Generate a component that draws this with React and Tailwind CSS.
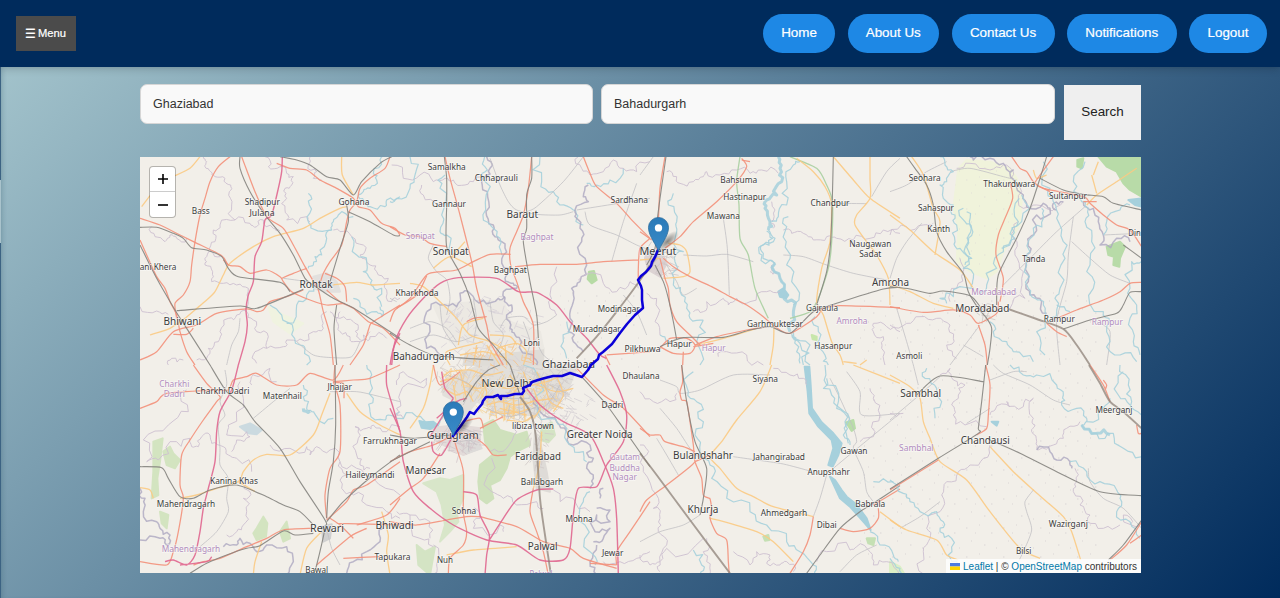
const LAND = '#f2efe9';

// Line styles of the base map: [colour, width, opacity, shape]
const STYLE = {
  r: ['#f3907a', 1.25, 0.9, 'smooth'],
  m: ['#e0668f', 1.4, 0.9, 'smooth'],
  y: ['#fbca83', 1.3, 0.9, 'smooth'],
  k: ['#85847f', 1.1, 0.9, 'smooth'],
  d: ['#8e8178', 1.9, 0.75, 'smooth'],
  g: ['#c0bec2', 0.9, 0.85, 'smooth'],
  p: ['#cdbfd0', 1, 0.9, 'rough'],
  b: ['#aca7c0', 1.5, 0.8, 'rough'],
  w: ['#a6d0dc', 1.2, 0.9, 'rough'],
  W: ['#a6d0dc', 3, 0.85, 'rough'],
  n: ['#a9cfa0', 1.3, 0.9, 'smooth'],
};

const noise = (n) => {
  const s = Math.sin(n * 12.9898) * 43758.5453;
  return s - Math.floor(s) - 0.5;
};

const parse = (d, seam) =>
  d
    .replace(/Z/g, '')
    .split('M')
    .filter(Boolean)
    .map((part) =>
      part.split('L').map((pair) => {
        const [x, y] = pair.trim().split(' ').map(Number);
        return [x, seam && y === 5 ? 0 : y];
      }),
    );

// Splits every segment and pushes its middle sideways, for rivers and borders.
function roughen(points, amount) {
  let out = points;
  for (let pass = 0; pass < 2; pass += 1) {
    const next = [out[0]];
    for (let i = 1; i < out.length; i += 1) {
      const [ax, ay] = out[i - 1];
      const [bx, by] = out[i];
      const shift = noise(ax + by * 1.7 + pass) * amount;
      next.push([(ax + bx) / 2 - (by - ay) * shift, (ay + by) / 2 + (bx - ax) * shift], [bx, by]);
    }
    out = next;
  }
  return 'M' + out.map(([x, y]) => `${x.toFixed(1)} ${y.toFixed(1)}`).join('L');
}

// Catmull-Rom curve through the points, for roads and railways.
function smooth(points) {
  let d = `M${points[0][0]} ${points[0][1]}`;
  for (let i = 0; i < points.length - 1; i += 1) {
    const p0 = points[i - 1] || points[i];
    const p1 = points[i];
    const p2 = points[i + 1];
    const p3 = points[i + 2] || p2;
    const c = (a, b, s) => (a + (b * s) / 8).toFixed(1);
    d += `C${c(p1[0], p2[0] - p0[0], 1)} ${c(p1[1], p2[1] - p0[1], 1)} ${c(p2[0], p3[0] - p1[0], -1)} ${c(p2[1], p3[1] - p1[1], -1)} ${p2[0]} ${p2[1]}`;
  }
  return d;
}

const shape = (d, kind, seam) =>
  parse(d, seam)
    .map((points) => (kind === 'rough' ? roughen(points, 0.75) : smooth(points)))
    .join('');

// Each tile draws its features in a 780 x 630 space, a third of a pixel per unit.
const TILES = [
  {
    x: 140, y: 155,
    areas: [['#f0f3e0', 'M385 455L430 480L490 505L450 535L400 500Z'], ['#e2e0de', 'M520 365L560 355L590 380L600 410L560 410L520 400Z']],
    lines: [
      ['p', 'M190 5L200 20L195 35L212 50L225 65L255 70L272 90L268 110L275 150L285 195L330 205L350 215L370 195L400 220L420 228'],
      ['p', 'M285 195L240 210L220 225L225 260L215 290L240 305'],
      ['p', 'M215 290L195 310L195 330L218 350L215 380L250 385L290 390L325 400L325 440L320 470L290 480L265 490L240 530L235 560L205 580L200 610L170 615'],
      ['p', 'M375 5L385 35L420 35L440 55L460 65L455 90L435 100L440 130L435 165L440 195L500 185L510 200'],
      ['p', 'M580 225L600 230L635 245L670 270L660 300L690 330L710 350L745 370L740 405L755 440L780 430'],
      ['p', 'M0 455L50 468L85 478'], ['p', 'M35 215L45 245L75 260L90 240L110 250L140 250'],
      ['p', 'M320 470L340 495L350 530L385 545L380 580L345 590L350 625'],
      ['p', 'M380 580L430 575L440 555L480 552L520 530L550 520L545 490L560 470'],
      ['g', 'M300 490L295 530L275 570L260 630'], ['p', 'M85 630L95 610L130 615'],
      ['p', 'M510 5L505 30L530 50L520 70L545 75'], ['p', 'M600 470L590 500L600 530L630 545L640 560L670 540L690 530'],
      ['p', 'M570 470L600 490L640 500L655 515L650 545L670 555L690 545L740 550'],
      ['w', 'M745 5L720 15L700 55L710 75L690 100L670 110L655 125'],
      ['w', 'M655 125L680 140L690 155L735 155L740 135L780 125'],
      ['w', 'M505 115L508 150L505 200L520 222L575 225L580 200L595 180L640 185'],
      ['w', 'M575 225L560 250L545 300L525 305L520 330L505 340'],
      ['w', 'M635 245L650 300L680 320L670 350L690 370L700 395L725 400L725 455'],
      ['w', 'M640 430L660 455L710 470L725 485L720 455'],
      ['w', 'M390 450L425 480L460 525L480 570L495 580L500 630'], ['w', 'M530 385L500 420L470 450L440 505'],
      ['g', 'M470 560L520 600L580 608L635 605L660 560'],
      ['y', 'M5 155L30 122'], ['y', 'M105 62L150 40L180 5'], ['y', 'M605 5L607 60L640 120'],
      ['y', 'M135 490L200 435L225 410L250 360L270 325L340 275L400 245L490 220L540 190L600 160L620 155'],
      ['y', 'M580 390L650 382L700 390L780 385'], ['y', 'M30 540L90 520L135 490'],
      ['r', 'M270 5L235 35L210 80L195 130L180 180L165 260L155 330L150 380L130 420L105 445L110 490'],
      ['r', 'M0 190L60 210L120 240L165 262L245 302L265 330L300 335L330 355L380 345L420 365L430 380L455 410L510 435L560 450L615 445'],
      ['r', 'M265 330L250 315M425 370L460 355L500 340'],
      ['r', 'M305 5L320 45L345 110L380 185L430 220L460 270L495 335L515 370L535 405L550 470L570 540L580 630'],
      ['r', 'M410 25L450 40L500 45L540 75L590 100L640 130L655 155L690 165L725 205L765 220L780 240'],
      ['r', 'M750 5L735 40L690 70L660 100L650 140L630 165L620 200L605 270L570 320L550 355L540 385'],
      ['r', 'M0 255L20 300L50 365L75 400L90 440L110 480L120 530L140 590L165 630'],
      ['r', 'M0 615L50 590L100 530L170 510L230 475L320 462L350 470L370 465L390 440L440 425L490 405'],
      ['r', 'M555 355L590 370L615 395L620 440M560 405L600 440L640 460L685 500L730 520L780 570'],
      ['r', 'M780 450L740 475L700 500L690 510L670 570L630 630M100 538L140 538L160 520'],
      ['m', 'M427 5L425 50L415 100L395 180L375 195L365 260L345 305L340 380L325 420L318 465L322 510L315 560L295 630'],
      ['m', 'M780 535L760 580L750 630'],
      ['k', 'M300 5L300 40L330 110L375 180L420 235L460 300L495 370L520 390L580 430L650 465L780 550'],
      ['k', 'M0 217L50 217L100 235L130 250L155 278L200 285L245 305L265 340L295 365L420 382L450 410'],
      ['k', 'M420 5L470 15L510 30L560 65L600 75L640 120L665 80L720 25L755 5'],
      ['k', 'M620 150L625 200L600 280L570 380'], ['g', 'M430 370L500 380L520 390'],
      ['k', 'M625 170L690 200L760 240L780 242'],
      ['k', 'M490 403L350 460L300 453L110 467'],
      ['k', 'M0 270L50 370L105 465L140 520L210 630'], ['k', 'M590 450L582 520L590 630'],
    ],
  },
  {
    x: 390, y: 155,
    areas: [
      ['#dcdbd9', 'M200 500L235 450L270 435L280 470L250 490L215 505Z'],
      ['#dfdcd7', 'M240 540L290 530L380 560L460 580L460 630L220 630Z'],
      ['#ece9e3', 'M130 450L340 435L360 500L450 530L460 580L250 600L180 560Z'],
      ['#b7dba5', 'M597 350L612 348L620 375L605 385L593 372Z'],
    ],
    lines: [
      ['b', 'M290 5L300 40L285 65L292 110L288 170L310 210L315 245L335 260L340 300L355 340L345 370L370 385L380 400L340 410L345 430L365 450L350 480L360 520L375 540L395 560L430 600L440 630'],
      ['w', 'M284 5L292 45L280 75L287 165L305 215L330 250L336 300'],
      ['p', 'M5 30L40 70L90 60L130 80L165 70L190 75L225 90L255 70L280 75'],
      ['p', 'M95 90L100 120L140 150L165 150'], ['g', 'M130 270L115 310L140 350L170 375L180 430L170 480'],
      ['w', 'M60 5L75 60L60 100L20 130L0 140'], ['w', 'M165 60L150 100L155 180L150 230L170 240L165 290'],
      ['w', 'M450 5L455 80L490 110L510 150L550 165L560 190L580 210'],
      ['b', 'M595 90L580 125L595 140L555 165L560 190L570 220L575 260L590 330L570 380L545 400L550 440L540 490L535 530L550 560L580 590'],
      ['w', 'M700 40L660 75L620 90L590 85M530 500L520 560L530 610'],
      ['p', 'M565 5L575 40L600 60L640 50L670 15L700 40L740 50L780 20'],
      ['g', 'M300 10L330 90L355 140L380 165L440 178L510 180L550 170'],
      ['g', 'M580 5L520 80L440 155L410 170M560 165L780 130M740 85L700 200L665 320M585 170L600 210L680 240L740 270L780 285'],
      ['p', 'M565 375L640 385L680 410L720 380L745 400M500 335L480 420L480 460L500 480'],
      ['b', 'M110 470L150 450L200 455L210 415L240 415L280 435L325 430L345 425M110 470L120 530L110 580L150 600'],
      ['g', 'M0 430L20 440M60 520L120 500L170 520L200 560M150 450L160 520L200 580M60 560L130 540L200 560L260 540M250 430L260 500L250 560M300 440L310 500L340 540L320 600'],
      ['g', 'M330 520L350 490L400 485L430 510L470 500L500 480M440 560L460 600L500 630M700 420L740 470L770 540M400 500L420 560L410 600'],
      ['y', 'M60 385L100 395L150 440L200 490L240 540L300 560L370 600M180 310L225 260M245 335L180 305L130 340M205 570L220 510L280 490M290 570L330 630M180 630L170 590L280 560M320 580L380 565L410 590L400 630'],
      ['y', 'M210 600L280 590L350 610M260 570L250 630M345 570L350 630M300 540L360 545L380 570'],
      ['r', 'M165 5L180 70L210 180L245 320L260 400L290 510L300 560L340 630'],
      ['r', 'M425 5L415 100L400 180L380 230L360 280L362 330L380 380L400 440L430 510L430 630'],
      ['r', 'M0 215L45 240L90 245L120 265L170 275M0 500L15 465L60 430L110 360L155 350L200 345L250 320L300 298L362 298'],
      ['r', 'M375 335L450 328L560 328L640 320L745 315M110 363L80 420L20 460M230 500L250 490L290 485M580 5L600 55L620 95L680 145L730 200L780 250M780 250L750 280L745 340L745 375'],
      ['m', 'M5 630L15 560L50 490L100 430L150 385L205 368L320 370L385 410L440 412L500 450L540 500L590 550L630 600L650 610'],
      ['r', 'M650 600L780 590'],
      ['r', 'M645 600L660 630'],
      ['k', 'M163 5L170 70L170 150L170 275L210 355L240 430L265 520L310 570L360 630'],
      ['k', 'M0 535L60 570L130 600L230 610L310 615'],
      ['k', 'M425 5L425 70L410 120L410 220L400 260L420 380L440 480L445 550'],
      ['d', 'M780 330L740 390L680 470L620 545L560 610'],
    ],
  },
  {
    x: 640, y: 155,
    areas: [
      ['#dcd3d3', 'M20 290L55 290L80 325L60 365L25 345L15 310Z'],
      ['#a6d0dc', 'M415 410L430 400L445 420L438 430L420 425Z'], ['#c7e6ab', 'M515 540L530 545L530 555L518 553Z'],
    ],
    lines: [
      ['p', 'M80 50L110 65L120 85L160 80L190 65L200 50L240 60L290 45L330 55L365 45L415 55'],
      ['p', 'M20 415L50 430L45 500L60 540M160 470L190 470L200 440L250 430L265 450L290 430L330 440L380 410L420 410'],
      ['p', 'M430 225L455 235L490 235L520 255L560 245L590 250L640 255L690 250L730 225L780 235'],
      ['p', 'M235 605L260 590L320 600L370 630M780 530L740 515L700 505L700 530L730 545L725 580L735 630'],
      ['p', 'M395 140L405 165L390 200L400 220M395 330L410 355L390 350'],
      ['g', 'M0 60L40 5M15 290L35 260M130 300L200 303L260 298L340 320M250 190L262 280L268 420M590 145L680 146M780 10L740 50L695 125'],
      ['g', 'M430 300L490 305L560 330L640 355L740 375M80 330L110 380L130 420L170 400'],
      ['w', 'M100 115L85 150L110 200L110 230L130 290L105 320L100 390L125 420L140 460L150 490L190 495M190 495L170 560L180 630M60 540L80 560'],
      ['W', 'M415 5L420 40L425 80L410 120L380 135L375 160L390 200L385 225'],
      ['w', 'M385 225L405 250L370 270L370 295L405 325'],
      ['w', 'M380 228L398 250L364 272L366 300L405 325L420 370L425 410'],
      ['W', 'M405 325L420 370L425 410L455 435L460 480L450 530'],
      ['w', 'M480 20L460 30L440 80L440 150L415 185L395 200M445 185L435 230L445 290L440 330L455 380L460 450'],
      ['w', 'M455 535L480 565L490 630M460 530L510 570L510 630M455 540L470 590L480 625M525 485L535 530L525 565L555 600L565 630'],
      ['n', 'M300 5L290 80L297 150L300 250L325 300L345 400L385 490'],
      ['n', 'M450 5L530 40L560 90L577 140L575 260L565 340L535 430L510 470L450 490'],
      ['y', 'M470 10L520 50L555 95L574 145L570 260L545 340L530 440L550 480L575 560L600 600L610 630'],
      ['y', 'M580 5L640 75L690 130L780 190M690 5L690 70L690 130L650 180L645 210L680 260L710 300L745 370L750 450'],
      ['y', 'M85 265L120 270L140 290L150 350L130 365L70 370M0 315L60 310M402 510L400 570L390 630M170 570L250 550L350 520M610 620L650 625M660 630L680 615'],
      ['r', 'M75 5L60 100L55 200L50 290M305 10L320 35L290 80L230 140L160 200L120 245L75 280'],
      ['r', 'M305 15L330 20M0 230L35 255M70 310L100 335L150 365L215 395L270 425L320 450L370 485L405 515L450 535L530 485L545 460'],
      ['r', 'M60 310L75 370L85 400L90 450L110 500L150 540L180 570M60 575L100 595L150 595L165 570L140 550L90 550L60 580M165 570L230 545L320 525L380 515M160 575L220 565M130 590L128 630'],
      ['r', 'M545 460L600 452L780 458'],
      ['k', 'M78 5L70 60L60 130L50 210L45 280L20 330'], ['k', 'M45 330L70 380L85 430L100 500L110 555M580 5L577 130L572 260L560 350L530 450M60 575L130 548L250 547L330 525L390 515L450 535L520 470L590 445L730 402L780 397'],
      ['d', 'M55 290L30 340L0 370'],
    ],
  },
  {
    x: 890, y: 155,
    areas: [
      ['#f0f3db', 'M205 40L230 15L300 20L360 40L380 70L395 140L390 210L340 290L320 350L290 370L240 350L200 320L205 220L190 160Z'],
      ['#b8dba8', 'M625 5L755 5L755 125L720 105L700 85L680 50L650 35Z'], ['#b8dba8', 'M650 275L690 260L705 275L690 310L688 335L670 330L672 305L655 300Z'],
      ['#b8dba8', 'M562 15L580 10L575 40L562 35Z'], ['#a6d0dc', 'M715 135L755 130L755 155L735 150Z'],
    ],
    lines: [
      ['p', 'M200 40L240 25L300 45L340 30L370 50L375 80L395 110L400 160L440 150L500 155L520 140'],
      ['b', 'M230 5L250 15L300 10L340 25L370 45L375 85L400 120L410 155L460 145L480 160L440 180L430 240L415 260L410 300L425 310L415 380L420 420L455 440L470 475'],
      ['b', 'M520 140L490 145L500 165M580 140L610 160L625 200L640 240L630 270L680 250L720 260'],
      ['p', 'M0 240L50 215L100 210L130 205M210 310L220 350L200 400L180 440M385 200L370 250L375 300L400 350L405 430L360 460M0 510L50 505L90 485L140 490L180 510L190 550L170 570L200 610'],
      ['g', 'M180 50L240 40L340 65L380 75M0 110L50 90L110 50L170 20M95 205L50 260L20 310L0 370M550 185L535 300L530 380L500 500L510 630M545 260L600 310L660 360L720 385M585 155L500 230L420 310L340 390M750 235L640 240M20 460L50 560L70 630M180 630L240 550L270 510M620 500L660 530L650 630M220 570L280 605'],
      ['w', 'M150 5L165 30L190 50L170 80L150 90L160 130L190 150L195 180L200 210L195 260L210 280L220 340L250 370L245 400L190 425L150 430L170 445'],
      ['w', 'M220 160L225 200L245 220L235 260L245 310L225 330M395 120L395 200L375 250L340 290L320 340L290 390L270 420'],
      ['w', 'M230 170L240 210L232 250L240 300M388 130L385 200L365 245L335 280'],
      ['w', 'M460 20L480 100L490 140L500 190L520 260L525 310L510 400L495 430L480 490M455 160L460 190L430 220L420 290L410 330L415 400L435 430L460 450L465 490L440 530L465 600'],
      ['w', 'M585 20L550 80L570 130L595 160L585 200L605 260L600 330L610 400L640 470L660 500L660 560L690 600L740 620M755 320L725 320L720 400L740 450L720 490L730 560L750 600'],
      ['w', 'M300 500L310 530L350 560L370 590L430 620M500 450L540 470M640 240L650 200L690 165L720 150'],
      ['y', 'M0 180L60 225L130 290L210 345L250 400M65 5L100 60L130 160L150 200L135 300M590 150L620 120L680 80L740 40M0 390L60 410L130 445L190 460M610 60L625 20M605 60L620 115M430 45L440 70L470 60'],
      ['r', 'M365 5L390 40L410 50L430 80L460 100L580 125L600 145L640 180L680 210L720 225L755 275M490 5L450 60L430 90'],
      ['r', 'M360 80L368 130L345 190L325 240L318 300L340 370L330 440M0 455L100 472L190 465L240 480L265 505L320 475L325 440M265 510L285 570L292 630'],
      ['r', 'M755 382L720 385L690 410L640 435L560 465L500 490M470 505L500 530L530 545M440 90L480 110M580 140L620 140'],
      ['k', 'M50 5L75 40L110 90L130 150L140 230L170 290L220 355L235 410L265 460L290 490L305 520L300 580L292 630M470 5L450 70L420 160L380 250L325 360L320 450'],
      ['k', 'M0 395L60 402L120 415L160 408L240 422L270 455M450 70L520 105L580 118L640 125L670 145L755 165M520 522L600 495L680 475L700 450L720 412L755 410M700 270L755 310'],
      ['d', 'M355 462L440 492L520 522L560 570L600 630'],
    ],
  },
  {
    x: 140, y: 365, seam: true,
    areas: [
      ['#d3e4c0', 'M40 230L68 220L60 290L52 340L55 390L35 400L40 320Z'], ['#d3e4c0', 'M70 260L90 245L100 265L120 285L105 310L80 300Z'],
      ['#d3e4c0', 'M350 490L370 455L382 475L378 515L350 525L340 505Z'], ['#d3e4c0', 'M60 440L85 450L80 490L65 475Z'], ['#d3e4c0', 'M420 500L440 470L450 520L430 530Z'],
      ['#cbdae0', 'M300 185L330 175L365 195L350 208L325 205Z'], ['#d0d0d0', 'M545 485L575 478L570 520L550 530Z'],
    ],
    lines: [
      ['p', 'M140 75L145 140L85 180L10 225L20 290L55 285L90 230L150 220M150 220L155 245L175 245L185 215L210 210L215 235L250 245L265 270L290 280L335 320'],
      ['p', 'M335 60L340 30L390 10L410 50M300 50L310 100L265 180L260 210L320 200L330 215L290 225L275 260M390 240L450 250L500 245L510 270L530 245L570 255L600 290L650 310L700 340L780 390'],
      ['g', 'M255 15L260 60L240 110L255 150L235 180L240 250L240 300L265 340L260 400L265 440L230 500L180 545M450 70L400 110L340 160'],
      ['p', 'M780 185L740 200L700 180L680 190L645 185L655 220L650 270L660 300L690 310M600 290L620 330L605 370L640 390L680 420L740 440L780 460'],
      ['b', 'M0 370L15 400L10 440L50 470L60 490L90 510L80 540L60 520L0 525M250 545L290 540L300 520L330 535L350 560L380 540L440 545L460 590L440 630'],
      ['p', 'M260 510L290 500L310 480L320 440L310 400L330 380L310 350'], ['b', 'M730 490L720 530L680 560L640 590L620 625'],
      ['g', 'M570 80L650 80L700 90L780 110M560 490L575 550L600 600'],
      ['w', 'M490 60L490 95L500 130L515 140L530 155L580 160M680 5L690 40L700 100L690 140L735 165L745 150L780 140'],
      ['W', 'M490 130L510 138'],
      ['y', 'M570 85L545 150L520 210L450 270L380 268L340 285L310 320L295 350L230 370L170 390L120 400M620 85L660 140L720 180L780 210M295 350L345 380M0 368L30 375L40 400M545 500L500 550L480 630M365 530L345 590L340 630M725 440L745 510L740 560L750 630'],
      ['r', 'M160 5L200 55L240 95L230 110L190 165L150 225L125 270L120 360L130 400L115 500L100 560L80 600L0 590'],
      ['r', 'M0 130L50 110L80 85L220 75L265 75L280 45L320 35L350 25L410 60L470 60L510 25L580 45L610 5M580 50L600 120L600 260L570 310L555 390L560 460'],
      ['r', 'M160 600L190 590L240 580L320 545L380 520L430 495L520 490M560 465L620 410L640 375L680 360L780 290M590 475L780 480M680 490L630 515L530 600M570 460L600 480L640 520M585 5L583 50L610 55L612 100'],
      ['r', 'M780 400L740 450L650 480M610 580L720 575M580 50L640 45L690 40L780 5'],
      ['m', 'M295 5L275 75L240 140L230 200L225 290L205 370L190 430L180 500L165 570L140 600L100 585L75 590M740 5L740 60L760 130L780 200M120 600L200 590L215 575'],
      ['k', 'M210 5L260 80L310 120L345 170L420 250L480 350L555 465L555 490L530 600L520 630M0 305L65 308L85 340L120 395L160 400L210 375L290 360L380 395L430 420L480 440L520 480'],
      ['k', 'M150 625L200 595L260 570L320 550L360 542L430 498L465 510L520 505M560 470L610 410L700 330L780 270M585 5L587 180L580 290L565 380L560 460'],
    ],
  },
  {
    x: 390, y: 365, seam: true,
    areas: [
      ['#e2dfda', 'M155 50L260 5L560 5L540 60L500 120L440 150L360 150L260 110L220 160L200 110L160 90Z'],
      ['#e3dbd9', 'M120 190L200 180L270 190L270 250L220 270L140 230Z'],
      ['#cfe1bc', 'M280 180L310 165L330 195L380 210L410 200L420 240L380 260L360 275L350 310L330 345L300 360L310 400L290 415L270 400L265 350L270 300L310 268L285 230Z'],
      ['#d8e6c9', 'M100 355L150 340L180 345L220 330L220 400L200 440L205 470L180 500L150 530L165 480L155 420L140 380Z'], ['#d4e4c4', 'M80 540L105 560L135 545L120 630L85 600Z'],
      ['#d4e4c4', 'M455 185L485 172L495 210L475 232L450 225Z'], ['#dedbd7', 'M435 200L450 230L470 320L480 380L440 370L430 280Z'],
      ['#a6d0dc', 'M88 168L105 172L130 170L142 180L120 192L95 188Z'], ['#dddbd9', 'M205 240L260 220L275 250L230 265Z'],
    ],
    lines: [
      ['p', 'M20 60L40 20L110 40L90 65L30 85L20 130L40 160M300 260L350 250L380 200L385 170M305 280L305 380L340 400L380 420L440 410L460 430M220 430L270 460L250 490L330 480L340 500M130 540L140 600L120 630M20 440L60 450L90 520L130 545'],
      ['b', 'M430 100L460 150L500 170L530 200L550 240L600 240L610 280L590 310L610 340L600 370M620 430L660 435L660 470L620 450L615 500L660 490L640 520L610 530M640 370L630 400'],
      ['p', 'M60 450L120 470L120 520M640 590L690 590L740 580L780 560M490 375L550 400L600 440'], ['b', 'M620 540L600 590L620 630'],
      ['w', 'M400 5L430 100L480 160L530 190L540 240L580 260L590 290M600 380L580 410L585 480L600 560L615 600M20 160L80 155L110 180L150 170L160 150'],
      ['y', 'M150 50L200 40L260 70L300 60L350 70L420 60M155 40L180 20L240 15L290 30L340 20M160 70L200 90L230 80L250 110M290 120L330 110L380 120L430 110M300 140L340 145L390 140L420 130M310 95L320 160M340 95L345 165M370 90L372 160M400 90L405 165M430 70L450 130L430 160M440 60L500 80L550 70M460 40L480 110L520 130M500 35L520 90L490 140M350 165L400 170L430 150M210 20L230 100M190 60L200 120M130 5L120 60L100 130L60 190'],
      ['y', 'M400 20L420 60L470 50L520 30M440 20L460 60M270 30L290 80L280 110M360 30L380 70L350 100M330 130L410 150M420 110L490 100'],
      ['g', 'M170 30L240 60L220 120M290 130L360 155L440 125M320 100L420 100M360 120L350 160M385 100L390 160M460 60L500 110M480 60L540 90M205 200L260 240M220 190L275 210M210 230L265 220M240 200L235 260M430 130L470 120L510 60'],
      ['y', 'M455 200L448 300L430 370'],
      ['r', 'M270 455L380 485L460 530L540 550L580 580L680 610'],
      ['y', 'M170 570L250 555L380 545'],
      ['r', 'M190 215L200 250L220 320L220 440L230 500L220 540L180 580L175 630M0 290L60 260L130 240L190 210M0 420L60 370L100 340L150 265M350 270L310 270L285 240L240 210L190 200'],
      ['r', 'M430 370L420 440L440 500L460 560L475 630M0 470L80 480L170 465L230 455L270 455M560 10L640 90L700 130L780 215M780 410L720 500L680 560L680 600M220 170L270 160L280 190M270 190L340 155M600 595L680 600M210 20L150 60L130 5'],
      ['m', 'M0 130L30 200L40 290L70 380L120 430L190 480L290 525L380 540L450 585L520 585L540 550L550 450L565 370L620 365L650 300L700 230L710 150L690 80L650 5'],
      ['m', 'M410 70L450 120L520 170L600 210L640 290L670 370L680 460L685 630M220 380L260 390L270 450L298 510L290 570L285 630M298 525L340 460L380 405L440 375L490 372M125 230L130 260L155 270L190 210M190 100L165 70L155 20M190 100L120 215M140 160L200 110L230 100'],
      ['d', 'M390 95L420 140L437 210L450 400L465 510L483 630'], ['k', 'M0 290L60 260L120 230M220 110L260 50L295 15L330 5M0 210L70 220L180 210'],
      ['k', 'M360 5L390 90M575 35L650 120L700 190L780 305'],
    ],
  },
  {
    x: 640, y: 365, seam: true,
    areas: [
      ['#a6d0dc', 'M494 5L508 5L512 60L516 130L545 172L580 205L605 235L595 270L578 305L565 300L580 250L575 225L535 185L508 145L503 80Z'],
      ['#a6d0dc', 'M570 335L585 345L605 375L620 395L645 415L665 440L680 460L692 495L670 470L630 425L600 400Z'],
      ['#b9dda8', 'M618 172L640 165L645 190L635 198Z'], ['#c5e0b4', 'M680 520L705 520L700 540L685 535Z'], ['#c5e0b4', 'M370 515L385 510L388 525L375 527Z'],
    ],
    lines: [
      ['p', 'M0 80L40 110L90 110L110 85M0 240L20 270L10 320L50 390L40 430L60 460L55 500L80 540L60 590L80 550L190 520M0 570L30 600L60 590L60 620'],
      ['p', 'M400 10L450 30L490 40L500 60M690 70L700 100L720 150L705 200L660 230M280 560L330 600L350 560L390 570L380 595L420 600L440 590L460 620M530 590L560 560L630 555L650 545L690 560L700 600L740 590L780 630M200 520L190 560L200 590L210 630'],
      ['g', 'M60 45L110 65L120 85L180 75L280 30L390 30M280 275L350 285L430 297L510 318M580 310L640 260L780 145M560 330L540 400L520 455M50 220L80 270L115 330M0 530L60 500L130 480L180 450M600 620L650 570L710 540M570 40L600 100L640 190L650 230L640 250L670 320L680 380L700 410M620 20L660 80L665 150L780 145'],
      ['g', 'M60 130L110 190L150 250L180 280'],
      ['w', 'M160 20L145 80L170 110L175 160L165 210L180 260L210 300L215 340L260 400L330 440L380 480L440 530L480 560L520 600L525 630M555 5L560 60L590 130L615 170L610 210L630 240M700 350L760 350M690 500L720 540L760 570L775 590M160 555L185 600L180 630'],
      ['w', 'M560 40L575 90L600 130L622 175L625 235'],
      ['y', 'M395 5L360 80L290 165L245 230L210 275L240 310L290 370L340 395L400 425L520 455M210 460L270 475L350 500L400 530L460 590M640 5L780 55M720 440L780 485'],
      ['r', 'M125 5L128 50L120 80L125 105L140 110L150 170L160 240L165 290L185 340L190 390L210 400M0 190L30 210L60 210L75 230L130 245L165 260M0 440L20 405L80 360L150 305L165 290M210 400L215 430L210 460L230 505L260 525L265 590L268 630M520 455L510 510L490 560L450 625M600 490L640 500L690 490L715 460L715 430M165 290L210 270'],
      ['k', 'M125 5L140 110L165 230L200 310L190 400L180 450'], ['d', 'M0 265L50 330L150 465L270 625'],
      ['k', 'M500 625L540 570L600 490L660 440L700 415L780 362'], ['r', 'M700 420L780 372'],
    ],
  },
  {
    x: 890, y: 365, seam: true,
    areas: [['#dcefc6', 'M0 590L30 605L45 630L0 630Z'], ['#a6d0dc', 'M305 170L325 170L320 182Z']],
    lines: [
      ['p', 'M150 30L180 10L190 45L225 60L205 90L185 120L190 150L225 180L290 185M300 150L315 135L360 125L350 110L400 125L430 100L430 160L435 180L425 200L440 230L445 255L490 240L520 220L530 190L570 170M0 145L40 145M300 240L280 280L240 300L205 320L170 350L155 390L150 440L110 490L120 520L100 560L105 630'],
      ['g', 'M310 5L340 25L420 60L490 105L540 120M300 45L370 20L410 20M0 165L100 80L150 35M230 175L300 130M70 5L85 60M430 375L405 410L410 440L425 495L400 560L385 590M30 490L90 455L150 410M595 310L600 350L640 400L700 430L755 490'],
      ['b', 'M440 255L480 260L500 285L540 290L545 310'], ['p', 'M555 310L560 350L550 380L570 420L600 450L590 470L640 490L690 480M755 470L700 450L720 480'],
      ['w', 'M360 5L400 30L440 30L500 60L520 90L515 120L560 130L590 160L575 180L620 205L670 205L700 250L755 275M590 170L640 130L660 100M690 5L715 60L725 110L755 150M700 20L685 90L720 120'],
      ['W', 'M575 180L620 205L660 210'],
      ['w', 'M540 290L590 320L630 350L680 375L690 400L680 440L720 470L750 520M110 10L105 40L140 70L155 110L135 160M0 345L40 385L60 410L90 440L140 440L160 470L150 500L185 520L175 570L205 600M0 580L30 610L40 630'],
      ['y', 'M0 30L60 65L90 100L100 170L120 220L150 290L230 345L300 440L390 550L450 580M300 245L370 320L430 375L470 410L520 455L545 500L572 585M0 465L50 495L140 525L170 570L205 585'],
      ['r', 'M287 5L300 60L295 150L290 190L260 210M0 375L145 285M755 470L710 540L660 585M755 510L720 535M600 5L640 60L660 110M640 45L650 60L645 75M740 180L745 205L755 205'],
      ['k', 'M287 5L275 110L265 190L265 205L145 280L0 372M80 90L150 33L280 50M300 225L390 265L500 320L630 380L755 392M755 465L700 540L655 585'],
      ['d', 'M597 5L630 55L660 110L700 140L755 190'],
    ],
  },
];

// Built-up districts filled with short streets: [cx, cy, rx, ry, count, colour]
const STREETS = [
  [520, 392, 50, 26, 170, '#d2cdcb'],
  [515, 395, 44, 24, 110, '#f6d293'],
  [545, 372, 34, 14, 70, '#d2cdcb'],
  [460, 375, 24, 18, 60, '#d6cfcd'],
  [462, 378, 20, 14, 26, '#f8cf90'],
  [490, 330, 50, 36, 90, '#d8d2d8'],
  [500, 352, 34, 14, 34, '#f6c48c'],
  [458, 440, 24, 14, 60, '#d3c6ca'],
  [570, 405, 22, 22, 46, '#d5d0d4'],
  [538, 440, 8, 30, 34, '#d0c9c8'],
  [662, 262, 12, 14, 30, '#cfc6c8'],
  [985, 311, 10, 8, 20, '#cfc8c4'],
];

function streets([cx, cy, rx, ry, count], seed) {
  let d = '';
  for (let i = 0; i < count; i += 1) {
    const n = seed * 211 + i * 3.7;
    const angle = noise(n) * Math.PI * 2;
    const radius = Math.sqrt(noise(n + 0.31) + 0.5);
    const x = cx + Math.cos(angle) * rx * radius;
    const y = cy + Math.sin(angle) * ry * radius;
    const turn = 0.5 + (i % 2) * (Math.PI / 2) + noise(n + 0.77) * 0.9;
    const length = 4 + (noise(n + 1.3) + 0.5) * 7;
    d += `M${x.toFixed(1)} ${y.toFixed(1)}l${(Math.cos(turn) * length).toFixed(1)} ${(Math.sin(turn) * length).toFixed(1)}`;
  }
  return d;
}

// Place names: [centre x, baseline, width, text, kind]; kind s = town, c = city, d = district
const LABELS = [
  [262.3, 205, 35, 'Shadipur', 's'], [262, 215.5, 25, 'Julana', 's'], [200.8, 214, 18, 'Bass', 's'], [354, 205.3, 31, 'Gohana', 's'],
  [158, 270, 36.5, 'ani Khera', 's'], [316, 287.7, 33, 'Rohtak', 'c'], [182.3, 325, 37.5, 'Bhiwani', 'c'],
  [446.7, 170.3, 38, 'Samalkha', 's'], [496.3, 180.5, 43, 'Chhaprauli', 's'], [449, 206.5, 34, 'Gannaur', 's'], [522.3, 217.6, 31.5, 'Baraut', 'c'],
  [420.3, 239, 29, 'Sonipat', 'd'], [537, 240, 33, 'Baghpat', 'd'], [450.7, 255.3, 36, 'Sonipat', 'c'], [510.3, 273, 33, 'Baghpat', 's'],
  [417, 295.7, 43, 'Kharkhoda', 's'], [618.7, 311.6, 42, 'Modinagar', 's'], [596.7, 331.9, 48, 'Muradnagar', 's'], [531.7, 346, 16.5, 'Loni', 's'],
  [423.7, 360, 62, 'Bahadurgarh', 'c'], [568.5, 367.7, 53, 'Ghaziabad', 'c'], [629.3, 202.7, 37.5, 'Sardhana', 's'],
  [738.7, 183.3, 37, 'Bahsuma', 's'], [744.7, 199.7, 43, 'Hastinapur', 's'], [723.3, 218.5, 33, 'Mawana', 's'], [830, 205.6, 39, 'Chandpur', 's'],
  [658, 255, 37, 'Meerut', 'c'], [870.3, 246.8, 42, 'Naugawan', 's'], [870.3, 257.2, 22, 'Sadat', 's'], [890.5, 285.7, 37, 'Amroha', 'c'],
  [822, 310.8, 32, 'Gajraula', 's'], [852, 323.5, 31, 'Amroha', 'd'], [775, 326.6, 56, 'Garhmuktesar', 's'], [642.5, 351.8, 36, 'Pilkhuwa', 's'],
  [679.3, 346.6, 25, 'Hapur', 's'], [713.7, 351.4, 24, 'Hapur', 'd'], [833.3, 349.3, 38, 'Hasanpur', 's'],
  [924.7, 181.3, 32, 'Seohara', 's'], [1009.3, 186.5, 52, 'Thakurdwara', 's'], [936, 211, 36, 'Sahaspur', 's'], [1068, 198.6, 38, 'Sultanpur', 's'],
  [938.7, 232.2, 23, 'Kanth', 's'], [1134.5, 235.9, 12.5, 'Din', 's'], [1033.7, 261.8, 23, 'Tanda', 's'], [993.7, 294.7, 45, 'Moradabad', 'd'],
  [982.3, 311.7, 54, 'Moradabad', 'c'], [1059.3, 322.2, 31, 'Rampur', 's'], [1107.3, 324.7, 31, 'Rampur', 'd'], [909.3, 358.7, 26, 'Asmoli', 's'],
  [174.3, 386.5, 30, 'Charkhi', 'd'], [174.3, 396.5, 21, 'Dadri', 'd'], [222.3, 394.3, 54, 'Charkhi Dadri', 's'], [282.3, 399, 39, 'Matenhail', 's'],
  [339.7, 390, 24.5, 'Jhajjar', 's'], [390, 444, 54, 'Farrukhnagar', 's'], [370, 477.7, 49, 'Haileymandi', 's'], [234, 484.3, 48, 'Kanina Khas', 's'],
  [186, 506.8, 58.5, 'Mahendragarh', 's'], [191, 552.3, 58.5, 'Mahendragarh', 'd'], [327, 531.7, 34, 'Rewari', 'c'], [394.5, 528.7, 38, 'Bhiwadi', 'c'],
  [392.5, 560.3, 36, 'Tapukara', 's'], [316.7, 572.8, 23, 'Bawal', 's'],
  [506.5, 387, 50, 'New Delhi', 'c'], [533, 428.7, 42, 'libiza town', 's'], [599.7, 438, 66, 'Greater Noida', 'c'], [452.7, 439, 52, 'Gurugram', 'c'],
  [425.7, 474, 40.5, 'Manesar', 'c'], [538, 460, 46, 'Faridabad', 'c'], [624.7, 460.3, 30.5, 'Gautam', 'd'], [624.7, 470.6, 30.5, 'Buddha', 'd'],
  [624.7, 480.4, 24.5, 'Nagar', 'd'], [542, 485.3, 42.5, 'Ballabgarh', 's'], [464, 513.7, 24.5, 'Sohna', 's'], [579, 521.5, 27, 'Mohna', 's'],
  [542.7, 550.3, 30, 'Palwal', 'c'], [445, 562.5, 16, 'Nuh', 's'], [612.7, 556.4, 21.5, 'Jewar', 's'], [641, 379.4, 37, 'Dhaulana', 's'], [612.3, 407.7, 21.5, 'Dadri', 's'],
  [541, 577, 23, 'Palwal', 'd'],
  [765.3, 382, 25.5, 'Siyana', 's'], [703, 459, 60, 'Bulandshahr', 'c'], [779, 459.8, 52, 'Jahangirabad', 's'], [854, 453.6, 27, 'Gawan', 's'],
  [828.7, 475.2, 42.5, 'Anupshahr', 's'], [703, 512.7, 31, 'Khurja', 'c'], [784, 516.3, 46.5, 'Ahmedgarh', 's'], [826.7, 527.7, 20, 'Dibai', 's'],
  [870.3, 507.2, 30, 'Babrala', 's'], [920.7, 396.8, 41, 'Sambhal', 'c'], [916.3, 450.8, 34.5, 'Sambhal', 'd'], [1114, 413, 37, 'Meerganj', 's'],
  [985.3, 444.3, 49, 'Chandausi', 'c'], [1068.3, 527, 39, 'Wazirganj', 's'], [1023.7, 554.4, 15.5, 'Bilsi', 's'],
];

const ROUTE =
  'M658 250L655 257L652 262L651 266L646 272L641 276L638 280L641 286L642 290L642 300L643 308L635 315L627 324L620 333L612 344L603 352L599 355L598 359L591 365L588 370L582 377L570 373L562 376L553 376L545 378L538 380L532 382L530 385L523 388L524 391L522 394L515 394L507 396L501 396L501 399L498 395L493 397L486 397L483 401L482 404L477 410L474 414L470 412L467 417L460 427L453 436';

function Label({ item }) {
  const [x, y, width, text, kind] = item;
  return (
    <text
      x={x}
      y={y}
      textAnchor="middle"
      textLength={width}
      lengthAdjust="spacingAndGlyphs"
      fontSize={kind === 'c' ? 10.8 : 8.7}
      fill={kind === 'd' ? '#b18cbd' : '#3c3c3c'}
      stroke="#fff"
      strokeOpacity="0.55"
      strokeWidth="1.3"
      paintOrder="stroke"
    >
      {text}
    </text>
  );
}

function Tile({ tile }) {
  return (
    <g transform={`translate(${tile.x} ${tile.y}) scale(0.33333)`}>
      {tile.lines.map(([kind, d], i) => {
        const [stroke, width, opacity, form] = STYLE[kind];
        return (
          <path
            key={i}
            d={shape(d, form, tile.seam)}
            fill="none"
            stroke={stroke}
            strokeWidth={width * 3}
            strokeOpacity={opacity}
            strokeLinejoin="round"
          />
        );
      })}
    </g>
  );
}

function TileAreas({ tile }) {
  return (
    <g transform={`translate(${tile.x} ${tile.y}) scale(0.33333)`}>
      {tile.areas.map(([fill, d], i) => (
        <path key={i} d={d} fill={fill} stroke={fill} strokeWidth="6" strokeLinejoin="round" />
      ))}
    </g>
  );
}

function Marker({ x, y }) {
  return (
    <g transform={`translate(${x} ${y}) scale(0.835)`}>
      <ellipse cx="11" cy="-12" rx="17" ry="7" transform="rotate(-42 11 -12)" fill="url(#pin-shadow)" />
      <path
        d="M0 0C-2 -7 -12 -18 -12 -28.5A12 12 0 0 1 12 -28.5C12 -18 2 -7 0 0Z"
        fill="url(#pin)"
        stroke="#2e6f9f"
        strokeWidth="1"
      />
      <circle cx="0" cy="-28" r="4.4" fill="#fff" />
    </g>
  );
}

function MapView() {
  return (
    <div className="relative h-[416px] w-[1001px] overflow-hidden bg-[#f2efe9]">
      <svg viewBox="140 157 1001 416" className="block h-[416px] w-[1001px] font-['Noto_Sans',sans-serif]">
        <defs>
          <linearGradient id="pin" x1="0" y1="0" x2="0" y2="1">
            <stop offset="0" stopColor="#2a7ab8" />
            <stop offset="1" stopColor="#3a8bc8" />
          </linearGradient>
          <radialGradient id="pin-shadow">
            <stop offset="0" stopColor="#000" stopOpacity="0.45" />
            <stop offset="1" stopColor="#000" stopOpacity="0" />
          </radialGradient>
          <pattern id="villages" width="37" height="29" patternUnits="userSpaceOnUse">
            <path d="M4 6h1.5M17 3h1M29 11h1.5M9 19h1M22 23h1.5M34 26h1M13 11h1" stroke="#d9d6d6" strokeWidth="1.2" />
          </pattern>
        </defs>
        <rect x="140" y="157" width="1001" height="416" fill={LAND} />
        <rect x="860" y="290" width="240" height="270" fill="url(#villages)" />
        <rect x="560" y="290" width="80" height="80" fill="url(#villages)" />
        {TILES.map((tile, i) => (
          <TileAreas key={i} tile={tile} />
        ))}
        <rect x="955" y="165" width="60" height="105" fill="url(#villages)" opacity="0.6" />
        {STREETS.map((area, i) => (
          <path key={i} d={streets(area, i + 1)} fill="none" stroke={area[5]} strokeWidth="0.8" />
        ))}
        {TILES.map((tile, i) => (
          <Tile key={i} tile={tile} />
        ))}
        {LABELS.map((item, i) => (
          <Label key={i} item={item} />
        ))}
        <path d={ROUTE} fill="none" stroke="#0b00d8" strokeWidth="2.5" strokeLinejoin="round" strokeLinecap="round" />
        <Marker x={658.5} y={251.3} />
        <Marker x={453.3} y={435.5} />
      </svg>

      <div className="absolute left-[9px] top-[9px] flex w-[27px] flex-col rounded-[4px] border-[1.5px] border-black/25 bg-white bg-clip-padding">
        <button className="flex h-[25px] items-center justify-center border-b border-[#ccc]">
          <svg width="12" height="12" viewBox="0 0 12 12" aria-label="Zoom in">
            <path d="M6 1v10M1 6h10" stroke="#000" strokeWidth="1.6" />
          </svg>
        </button>
        <button className="flex h-[25px] items-center justify-center">
          <svg width="12" height="12" viewBox="0 0 12 12" aria-label="Zoom out">
            <path d="M1 6h10" stroke="#000" strokeWidth="1.6" />
          </svg>
        </button>
      </div>

      <div className="absolute bottom-0 right-0 flex h-[14px] w-[195px] items-center justify-end whitespace-pre bg-white/80 pr-[4px] pt-px text-[10px] leading-[13px] text-[#333]">
        <svg width="10" height="7" viewBox="0 0 10 7" className="mr-[3px]">
          <path fill="#4c7be1" d="M0 0h10v3.5H0z" />
          <path fill="#ffd500" d="M0 3.5h10V7H0z" />
        </svg>
        <span className="text-[#0078a8]">Leaflet</span>
        <span> | © </span>
        <span className="text-[#0078a8]">OpenStreetMap</span>
        <span> contributors</span>
      </div>
    </div>
  );
}

const NAV = [
  ['Home', 'w-[72px]'],
  ['About Us', 'w-[91.5px]'],
  ['Contact Us', 'w-[103px]'],
  ['Notifications', 'w-[109.5px]'],
  ['Logout', 'w-[78px]'],
];

export default function App() {
  return (
    <div className="flex h-[598px] w-[1280px] flex-col overflow-hidden bg-[linear-gradient(135deg,#a8c8cf_0%,#002b5c_100%)] font-['Liberation_Sans',Arial,sans-serif]">
      <header className="relative flex h-[67px] shrink-0 items-center justify-between bg-[#002b5c] pl-4 pr-[13px] shadow-[0_2px_8px_rgba(0,0,0,0.18)]">
        <button className="flex h-[35px] w-[60px] items-center justify-center gap-[2px] bg-[#4b4b4b] pr-px text-[11.2px] text-white [-webkit-text-stroke:0.2px_white]">
          <span className="w-[11px] text-[12px]">☰</span>
          <span>Menu</span>
        </button>
        <nav className="flex gap-[12.5px]">
          {NAV.map(([label, width]) => (
            <a
              key={label}
              className={`${width} flex h-[39px] items-center justify-center rounded-full bg-[#1e88e5] text-[13.4px] text-white [-webkit-text-stroke:0.2px_white]`}
            >
              {label}
            </a>
          ))}
        </nav>
      </header>
      <div className="flex flex-1">
        <div className="flex w-px shrink-0 flex-col">
          <div className="h-[113px] bg-[#3c6383]" />
          <div className="h-[63px] bg-[#a9c3cc]" />
          <div className="flex-1 bg-[#3c6383]" />
        </div>
        <main className="flex flex-1 flex-col pl-[139px] pt-[17px] shadow-[inset_4px_0_5px_-3px_rgba(40,80,100,0.3)]">
          <div className="flex h-[73px] items-start">
            <input
              className="h-10 w-[453px] rounded-[7px] border border-[#d6d6d6] bg-[#f9f9f9] px-3 text-[12.5px] text-[#333]"
              defaultValue="Ghaziabad"
            />
            <input
              className="ml-2 h-10 w-[454px] rounded-[7px] border border-[#d6d6d6] bg-[#f9f9f9] px-3 text-[12.5px] text-[#333]"
              defaultValue="Bahadurgarh"
            />
            <button className="ml-[9px] mt-px h-[55px] w-[77px] bg-[#efefef] text-[13.4px] text-[#222]">Search</button>
          </div>
          <MapView />
        </main>
      </div>
    </div>
  );
}
